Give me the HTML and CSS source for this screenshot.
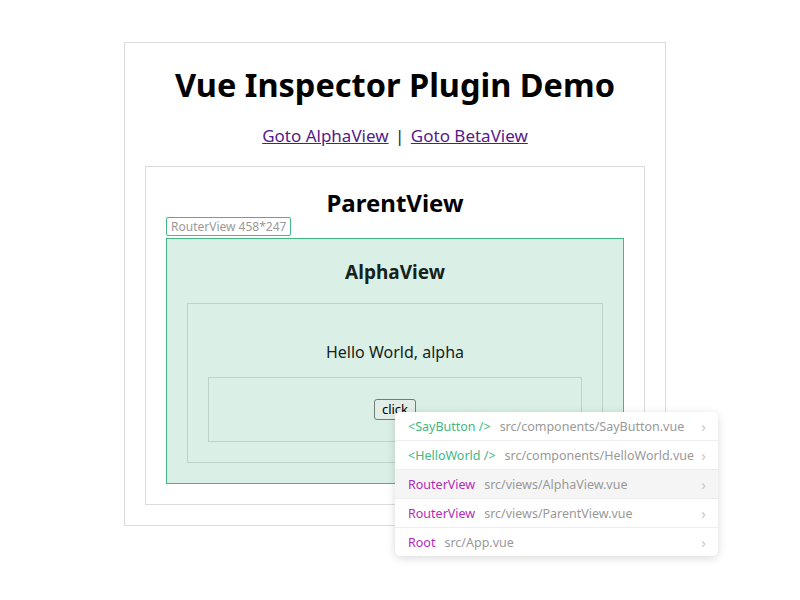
FILE: index.html
```html
<!DOCTYPE html>
<html>
<head>
<meta charset="utf-8">
<link rel="stylesheet" href="styles.css">
</head>
<body>
<div class="app">
  <h1 class="title">Vue Inspector Plugin Demo</h1>
  <nav class="nav"><a href="#">Goto AlphaView</a> <span class="sep">|</span> <a href="#">Goto BetaView</a></nav>
  <div class="parent">
    <h2 class="parent-title">ParentView</h2>
    <div class="router">
      <div class="overlay-label">RouterView 458*247</div>
      <h3 class="alpha-title">AlphaView</h3>
      <div class="hello">
        <p class="hello-text">Hello World, alpha</p>
        <div class="say">
          <button class="say-btn">click</button>
        </div>
      </div>
    </div>
  </div>
</div>
<div class="menu">
  <div class="row"><span class="name green">&lt;SayButton /&gt;</span><span class="path">src/components/SayButton.vue</span><span class="chev">&#x203A;</span></div>
  <div class="row"><span class="name green">&lt;HelloWorld /&gt;</span><span class="path">src/components/HelloWorld.vue</span><span class="chev">&#x203A;</span></div>
  <div class="row active"><span class="name purple">RouterView</span><span class="path">src/views/AlphaView.vue</span><span class="chev">&#x203A;</span></div>
  <div class="row"><span class="name purple">RouterView</span><span class="path">src/views/ParentView.vue</span><span class="chev">&#x203A;</span></div>
  <div class="row"><span class="name purple">Root</span><span class="path">src/App.vue</span><span class="chev">&#x203A;</span></div>
</div>
</body>
</html>
```
FILE: styles.css
```css
html, body {
  margin: 0;
  padding: 0;
  background: #fff;
}
body {
  font-family: "Noto Sans", "Open Sans", sans-serif;
  color: #000;
  position: relative;
  width: 800px;
  height: 600px;
  overflow: hidden;
}
.app {
  box-sizing: border-box;
  width: 542px;
  margin: 42px 0 0 124px;
  border: 1px solid #dcdcdc;
  padding: 0 20px 20px;
  text-align: center;
}
.title {
  margin: 0;
  padding-top: 20px;
  font-size: 32.5px;
  line-height: 44px;
  font-weight: 700;
}
.nav {
  margin-top: 18px;
  font-size: 17px;
  line-height: 22px;
}
.nav a {
  color: #551a8b;
}
.sep {
  color: #222;
  padding: 0 2px;
}
.parent {
  margin-top: 19px;
  border: 1px solid #dcdcdc;
  padding: 20px 20px 20px;
}
.parent-title {
  margin: 0 0 19px;
  font-size: 24px;
  line-height: 32px;
  font-weight: 700;
}
.router {
  position: relative;
  background: #daefe5;
  border: 1px solid #42b883;
  padding: 20px 20px 20px;
}
.overlay-label {
  position: absolute;
  left: -1px;
  bottom: calc(100% + 3px);
  border: 1px solid #42b883;
  border-radius: 2px;
  background: #fff;
  color: #999;
  font-size: 12px;
  line-height: 17px;
  padding: 0 4px;
  white-space: nowrap;
}
.alpha-title {
  margin: 0 0 18px;
  font-size: 19px;
  line-height: 26px;
  font-weight: 700;
  color: #14231c;
}
.hello {
  border: 1px solid #bcd3c8;
  padding: 37px 20px 20px;
}
.hello-text {
  margin: 0 0 14px;
  font-size: 16px;
  line-height: 22px;
  color: #14231c;
}
.say {
  border: 1px solid #bcd3c8;
  padding: 21px 0 20px;
}
.say-btn {
  box-sizing: border-box;
  height: 21px;
  font-family: "Noto Sans", sans-serif;
  font-size: 13px;
  line-height: 17px;
  padding: 0 7px;
  border: 1px solid #6f7d76;
  border-radius: 3px;
  background: #e4eee9;
  color: #000;
  vertical-align: top;
}
.menu {
  position: absolute;
  left: 395px;
  top: 412px;
  width: 323px;
  background: #fff;
  border-radius: 5px;
  box-shadow: 0 2px 10px rgba(0, 0, 0, 0.15);
  font-size: 12.5px;
  overflow: hidden;
}
.row {
  display: flex;
  align-items: center;
  height: 29px;
  padding: 0 12px 0 13px;
  border-bottom: 1px solid #eee;
  box-sizing: border-box;
  white-space: nowrap;
}
.row:last-child {
  border-bottom: none;
  height: 28px;
}
.row.active {
  background: #f5f5f5;
}
.name {
  margin-right: 9px;
}
.green {
  color: #42b883;
}
.purple {
  color: #b02cb8;
}
.path {
  color: #999;
  flex: 1;
}
.chev {
  color: #c8c8c8;
  font-size: 15px;
}
```
